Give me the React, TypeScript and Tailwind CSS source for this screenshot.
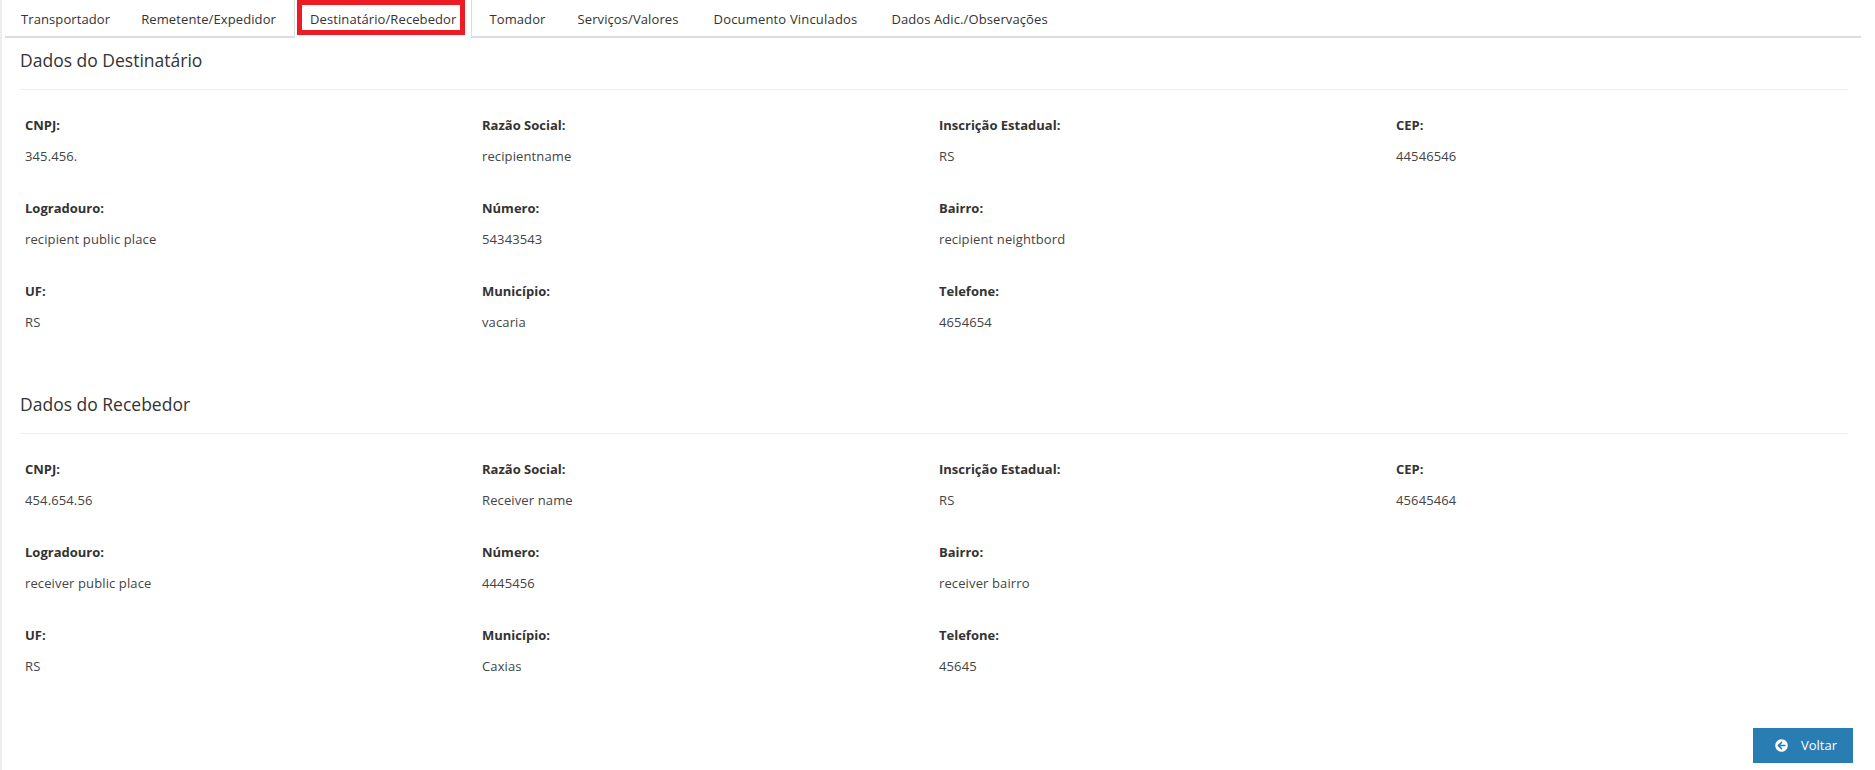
import React from 'react';
import { FaArrowCircleLeft } from 'react-icons/fa';

const tabs = [
  { label: 'Transportador', extra: '-mr-[1px]' },
  { label: 'Remetente/Expedidor', extra: '' },
  { label: 'Destinatário/Recebedor', extra: '' },
  { label: 'Tomador', extra: '' },
  { label: 'Serviços/Valores', extra: '' },
  { label: 'Documento Vinculados', extra: 'ml-[3px] mr-[2px] tracking-[0.18px]' },
  { label: 'Dados Adic./Observações', extra: '' },
];

const destinatario = [
  { label: 'CNPJ:', value: '345.456.' },
  { label: 'Razão Social:', value: 'recipientname' },
  { label: 'Inscrição Estadual:', value: 'RS' },
  { label: 'CEP:', value: '44546546' },
  { label: 'Logradouro:', value: 'recipient public place' },
  { label: 'Número:', value: '54343543' },
  { label: 'Bairro:', value: 'recipient neightbord' },
  null,
  { label: 'UF:', value: 'RS' },
  { label: 'Município:', value: 'vacaria' },
  { label: 'Telefone:', value: '4654654' },
];

const recebedor = [
  { label: 'CNPJ:', value: '454.654.56' },
  { label: 'Razão Social:', value: 'Receiver name' },
  { label: 'Inscrição Estadual:', value: 'RS' },
  { label: 'CEP:', value: '45645464' },
  { label: 'Logradouro:', value: 'receiver public place' },
  { label: 'Número:', value: '4445456' },
  { label: 'Bairro:', value: 'receiver bairro' },
  null,
  { label: 'UF:', value: 'RS' },
  { label: 'Município:', value: 'Caxias' },
  { label: 'Telefone:', value: '45645' },
];

type Field = { label: string; value: string } | null;

const Section: React.FC<{ title: string; fields: Field[] }> = ({ title, fields }) => (
  <section>
    <h2 className="h-[52px] pt-[12px] border-b border-[#eeeeee] text-[17.5px] leading-[20px] font-medium text-[#333333]">
      {title}
    </h2>
    <div className="grid grid-cols-4 mt-[25px]">
      {fields.map((field, i) => (
        <div key={i} className="h-[83px] px-[5px]">
          {field && (
            <>
              <div className="h-[32px] pt-[1px] text-[13px] leading-[18px] font-bold text-[#333333]">{field.label}</div>
              <div className="text-[13px] leading-[18px] tracking-[0.12px] text-[#444444]">{field.value}</div>
            </>
          )}
        </div>
      ))}
    </div>
  </section>
);

export default function App() {
  return (
    <div className="relative h-[770px] bg-white border-l-[2px] border-[#eeeeee] overflow-hidden font-['Open_Sans',sans-serif]">
      {/* Tabs */}
      <div className="flex h-[38px] ml-[3px] mr-[14px] border-b-2 border-[#dddddd]">
        {tabs.map(({ label, extra }, i) => (
          <div
            key={label}
            className={
              i === 2
                ? 'relative h-[38px] px-[15px] ml-[2px] mr-[1px] bg-white border-x border-[#dddddd] text-[13px] leading-[38px] tracking-[0.1px] text-[#333333]'
                : `h-[36px] px-[16px] text-[13px] leading-[38px] tracking-[0.1px] text-[#333333] ${extra}`
            }
          >
            {label}
            {i === 2 && (
              <span className="absolute left-[2px] right-[6px] top-0 h-[35px] border-[5px] border-[#ed1c24]" />
            )}
          </div>
        ))}
      </div>

      {/* Dados */}
      <div className="ml-[18px] w-[1828px]">
        <Section title="Dados do Destinatário" fields={destinatario} />
        <div className="h-[18px]" />
        <Section title="Dados do Recebedor" fields={recebedor} />
      </div>

      <button className="absolute right-[22px] top-[728px] flex items-center w-[100px] h-[35px] pl-[22px] bg-[#2a7db3] text-white text-[13px]">
        <FaArrowCircleLeft className="w-[13px] h-[13px] mr-[13px]" />
        Voltar
      </button>
    </div>
  );
}
